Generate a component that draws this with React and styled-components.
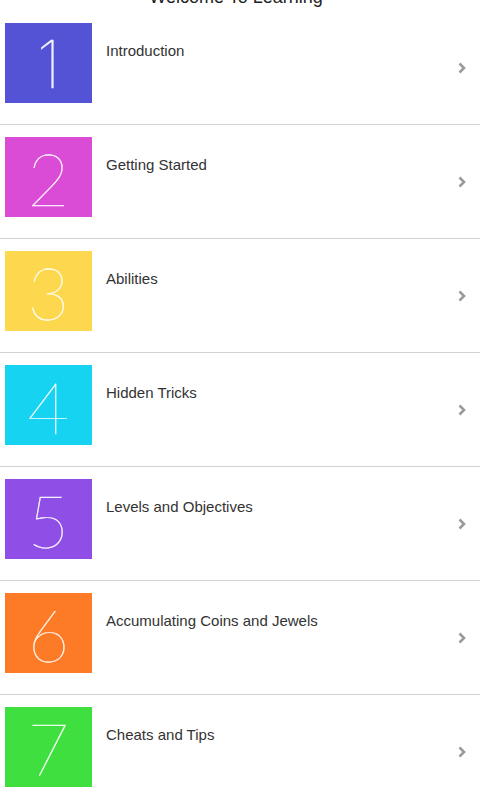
import React from "react";
import styled, { createGlobalStyle } from "styled-components";

const Global = createGlobalStyle`
  html, body { margin: 0; padding: 0; background: #fff; }
  body { font-family: "Liberation Sans", Arial, sans-serif; overflow: hidden; }
`;

const Page = styled.div`
  width: 480px;
  height: 800px;
  overflow: hidden;
  background: #fff;
`;

const Header = styled.header`
  height: 11px;
  display: flex;
  justify-content: center;
`;

const Title = styled.h1`
  margin: -13px 0 0 -8px;
  font-size: 18px;
  line-height: 20px;
  font-weight: normal;
  color: #222;
`;

const List = styled.ul`
  list-style: none;
  margin: 0;
  padding: 0;
`;

const Row = styled.li`
  display: flex;
  align-items: flex-start;
  padding: 12px 0 21px 5px;
  border-bottom: ${(p) => (p.$last ? "none" : "1px solid #d2d2d2")};
`;

const Tile = styled.div`
  flex: 0 0 87px;
  height: 80px;
  background: ${(p) => p.$color};
  display: flex;
  align-items: center;
  justify-content: center;
`;

const Digit = styled.span`
  font-family: ${(p) => (p.$alt ? '"Inter", "Lato"' : '"Lato", "Inter"')}, sans-serif;
  font-weight: 100;
  font-size: ${(p) => (p.$alt ? "66px" : "72px")};
  line-height: 72px;
  color: rgba(255, 255, 255, 0.92);
  -webkit-text-stroke: 0.35px rgba(255, 255, 255, 0.9);
  margin-top: 2px;
`;

const Label = styled.span`
  flex: 1;
  margin: 19px 0 0 14px;
  font-size: 15px;
  line-height: 18px;
  color: #333;
`;

const Chevron = styled.svg`
  flex: 0 0 auto;
  align-self: center;
  margin: 10px 13px 0 0;
  width: 10px;
  height: 14px;
`;

const items = [
  { n: 1, label: "Introduction", color: "#5453d6", alt: true },
  { n: 2, label: "Getting Started", color: "#db4cd6" },
  { n: 3, label: "Abilities", color: "#fdd84f" },
  { n: 4, label: "Hidden Tricks", color: "#16d3f2" },
  { n: 5, label: "Levels and Objectives", color: "#8f4ee6" },
  { n: 6, label: "Accumulating Coins and Jewels", color: "#fd7a26" },
  { n: 7, label: "Cheats and Tips", color: "#3edf3e" },
];

export default function App() {
  return (
    <Page>
      <Global />
      <Header>
        <Title>Welcome To Learning</Title>
      </Header>
      <List>
        {items.map((it, i) => (
          <Row key={it.n} $last={i === items.length - 1}>
            <Tile $color={it.color}>
              <Digit $alt={it.alt}>{it.n}</Digit>
            </Tile>
            <Label>{it.label}</Label>
            <Chevron viewBox="0 0 10 14">
              <polyline
                points="2.5,2.5 7,7 2.5,11.5"
                fill="none"
                stroke="#9a9a9a"
                strokeWidth="2.6"
              />
            </Chevron>
          </Row>
        ))}
      </List>
    </Page>
  );
}
